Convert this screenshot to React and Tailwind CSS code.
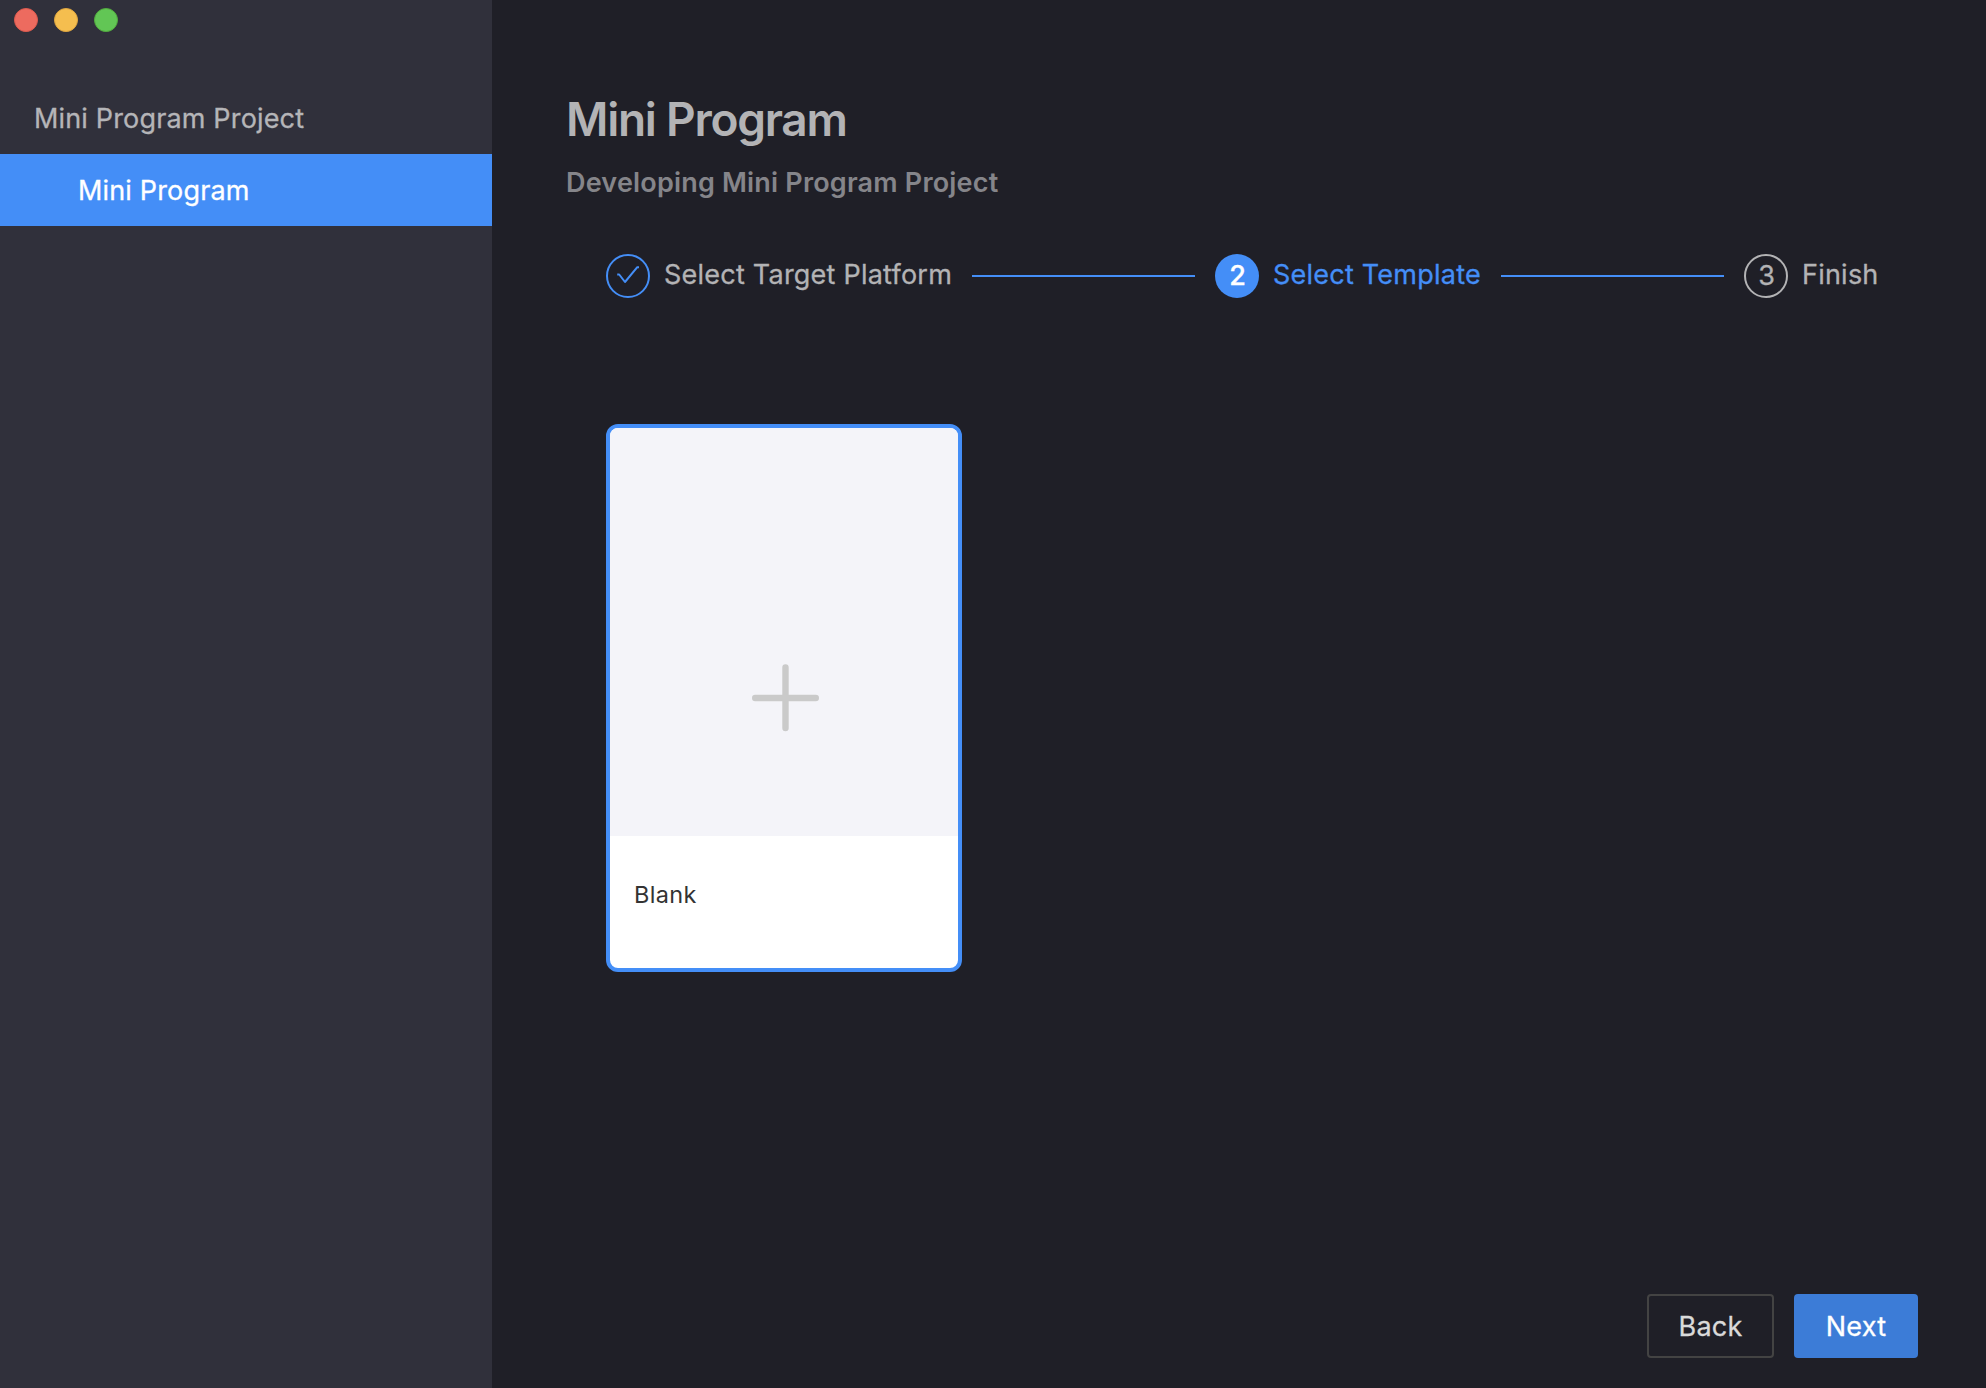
function TrafficLights() {
  return (
    <div className="flex h-[82px] gap-4 pl-3.5 pt-2">
      <span className="size-6 rounded-full border border-[#dd5a4e] bg-[#ed6b5f]" />
      <span className="size-6 rounded-full border border-[#dfa63f] bg-[#f5be4f]" />
      <span className="size-6 rounded-full border border-[#51ab3e] bg-[#62c655]" />
    </div>
  );
}

function Sidebar() {
  return (
    <aside className="w-[492px] shrink-0 bg-[#30303b] text-[27px] [-webkit-text-stroke:0.3px]">
      <TrafficLights />
      <div className="flex h-[72px] items-center pl-[34px] pt-0.5 tracking-[0.16px] text-[#b5b5b8]">
        Mini Program Project
      </div>
      <div className="flex h-[72px] items-center bg-[#448ef7] pl-[78px] pt-0.5 tracking-[0.16px] text-white">
        Mini Program
      </div>
    </aside>
  );
}

function Line() {
  return <span className="mt-[21px] h-0.5 w-[223px] shrink-0 bg-[#448ef7]" />;
}

function Stepper() {
  return (
    <div className="mt-[51px] flex items-start pl-10 text-[27px] leading-[42px] tracking-[0.23px] [-webkit-text-stroke:0.3px]">
      <div className="flex w-[366px] shrink-0 text-[#b3b3b5]">
        <span className="flex size-11 items-center justify-center rounded-full border-2 border-[#448ef7]">
          <svg width="40" height="40" viewBox="0 0 40 40" fill="none" stroke="#448ef7" strokeWidth="2">
            <path d="M9.2 18.5 H11.2 L17 26 L29.3 11.2 H31" strokeLinejoin="round" />
          </svg>
        </span>
        <span className="ml-3.5 whitespace-nowrap">Select Target Platform</span>
      </div>
      <Line />
      <div className="ml-5 flex w-[286px] shrink-0 text-[#448ef7]">
        <span className="flex size-11 items-center justify-center rounded-full bg-[#448ef7] pl-px font-medium tracking-normal text-white">
          2
        </span>
        <span className="ml-3.5 whitespace-nowrap">Select Template</span>
      </div>
      <Line />
      <div className="ml-5 flex shrink-0 text-[#b3b3b5]">
        <span className="flex size-11 items-center justify-center rounded-full border-2 border-[#b3b3b5] pl-px tracking-normal">
          3
        </span>
        <span className="ml-3.5 whitespace-nowrap">Finish</span>
      </div>
    </div>
  );
}

function TemplateCard() {
  return (
    <div className="ml-10 mt-[126px] flex h-[548px] w-[356px] flex-col overflow-hidden rounded-[12px] border-4 border-[#448ef7] bg-white">
      <div className="h-[408px] shrink-0 bg-[#f4f4f9] pl-[142px] pt-[236px]">
        <svg width="68" height="68" viewBox="0 0 68 68" stroke="#cacaca" strokeWidth="6.4" strokeLinecap="round">
          <path d="M3.2 34 H63.8 M33.5 3.4 V64" />
        </svg>
      </div>
      <div className="pl-6 pt-[42px] text-[23.5px] leading-[34px] tracking-[0.35px] text-[#333333]">
        Blank
      </div>
    </div>
  );
}

export default function App() {
  return (
    <div className="flex h-[1388px] w-[1986px] overflow-hidden bg-[#1f1f27] font-['Inter',sans-serif]">
      <Sidebar />
      <main className="flex flex-1 flex-col pl-[74px]">
        <h1 className="mt-[89px] text-[46px] font-semibold leading-[60px] tracking-[-1.25px] text-[#b3b3b5]">
          Mini Program
        </h1>
        <p className="mt-3.5 text-[27px] font-semibold leading-[40px] tracking-[0.19px] text-[#85858a]">
          Developing Mini Program Project
        </p>
        <Stepper />
        <TemplateCard />
        <div className="mb-[30px] mr-[68px] mt-auto flex justify-end gap-5 text-[27px] tracking-[0.2px] [-webkit-text-stroke:0.3px]">
          <button className="h-16 w-[127px] rounded border-2 border-[#434343] pt-0.5 text-[#dadada]">Back</button>
          <button className="h-16 w-[124px] rounded bg-[#3c7cd7] pt-0.5 text-white">Next</button>
        </div>
      </main>
    </div>
  );
}
